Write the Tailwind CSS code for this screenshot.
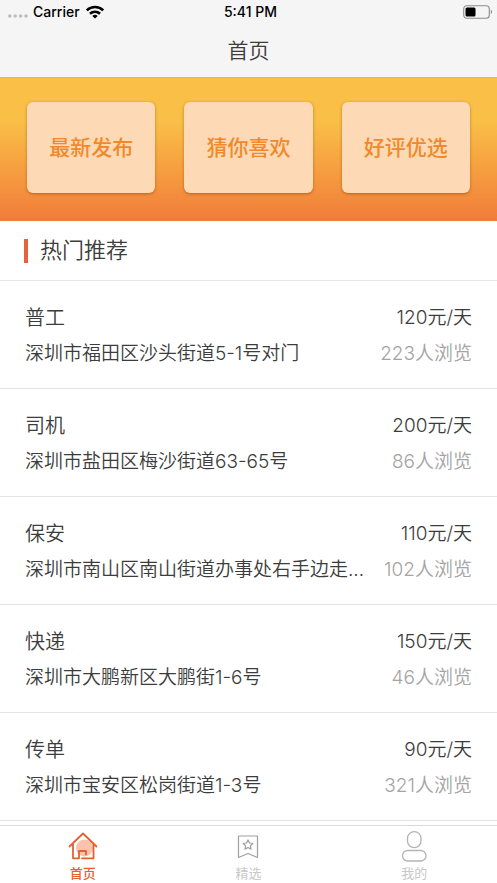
<!DOCTYPE html>
<html lang="zh-CN">
<head>
<meta charset="utf-8">
<meta name="viewport" content="width=device-width, initial-scale=1">
<title>首页</title>
<script src="https://cdn.jsdelivr.net/npm/@tailwindcss/browser@4"></script>
</head>
<body class="flex min-h-screen flex-col bg-white font-['Inter','Noto_Sans_CJK_SC',sans-serif] text-[#3c3c3c]">

<header class="border-b border-[#d9b58a] bg-[#f6f5f6]">
  <div class="grid h-6 grid-cols-3 items-center pr-1 pl-2 text-sm font-medium text-black">
    <div class="flex items-center gap-[5px]">
      <svg class="mt-2 h-1 w-5" viewBox="0 0 20 4" fill="#bdbdbd" aria-hidden="true"><circle cx="1.8" cy="2" r="1.8"/><circle cx="7.2" cy="2" r="1.8"/><circle cx="12.6" cy="2" r="1.8"/><circle cx="18" cy="2" r="1.8"/></svg>
      <span>Carrier</span>
      <svg class="h-[14px] w-5" viewBox="0 0 20 14" fill="none" stroke="#000" stroke-width="2.6" aria-hidden="true"><path d="M1.8 5.4a11.7 11.7 0 0 1 16.4 0"/><path d="M5 8.8a7.2 7.2 0 0 1 10 0"/><path d="M10 13.6 7.3 11a3.9 3.9 0 0 1 5.4 0Z" fill="#000" stroke="none"/></svg>
    </div>
    <span class="text-center">5:41 PM</span>
    <svg class="h-[14px] w-[30px] justify-self-end" viewBox="0 0 30 14" fill="none" aria-hidden="true"><rect x=".7" y=".7" width="25.6" height="12.6" rx="3" stroke="#8c8c8c" stroke-width="1.1"/><rect x="2.5" y="2.5" width="10" height="9" rx="1.5" fill="#000"/><path d="M27.8 4.8v4.4c1.6-.6 1.6-3.8 0-4.4Z" fill="#8c8c8c"/></svg>
  </div>
  <h1 class="flex h-[53px] items-center justify-center text-[21px] font-[350]">首页</h1>
</header>

<main>
  <nav aria-label="推荐分类" class="grid grid-cols-3 gap-[29px] bg-linear-to-b from-[#f9bf46] from-30% to-[#f07b3a] px-[27px] pt-6 pb-7 text-[21px] font-medium text-[#f0892b]">
    <button class="h-[91px] rounded-md bg-[#fdd9b5] shadow-[0_1px_3px_rgba(120,60,0,0.5)]">最新发布</button>
    <button class="h-[91px] rounded-md bg-[#fdd9b5] shadow-[0_1px_3px_rgba(120,60,0,0.5)]">猜你喜欢</button>
    <button class="h-[91px] rounded-md bg-[#fdd9b5] shadow-[0_1px_3px_rgba(120,60,0,0.5)]">好评优选</button>
  </nav>

  <section class="font-[350]">
    <h2 class="flex h-15 items-center gap-3 border-b border-[#e6e6e6] px-6 text-[22px]"><span class="h-6 w-1 bg-[#e8623a]"></span>热门推荐</h2>
    <ul class="text-[19px] leading-9">
      <li class="border-b border-[#e4e4e4] px-[25px] pt-[19px] pb-4">
        <div class="flex justify-between"><h3 class="text-xl leading-9">普工</h3><span>120元/天</span></div>
        <div class="flex justify-between gap-2"><p class="truncate">深圳市福田区沙头街道5-1号对门</p><span class="shrink-0 text-[#a4a4a4]">223人浏览</span></div>
      </li>
      <li class="border-b border-[#e4e4e4] px-[25px] pt-[19px] pb-4">
        <div class="flex justify-between"><h3 class="text-xl leading-9">司机</h3><span>200元/天</span></div>
        <div class="flex justify-between gap-2"><p class="truncate">深圳市盐田区梅沙街道63-65号</p><span class="shrink-0 text-[#a4a4a4]">86人浏览</span></div>
      </li>
      <li class="border-b border-[#e4e4e4] px-[25px] pt-[19px] pb-4">
        <div class="flex justify-between"><h3 class="text-xl leading-9">保安</h3><span>110元/天</span></div>
        <div class="flex justify-between gap-2"><p class="truncate">深圳市南山区南山街道办事处右手边走...</p><span class="shrink-0 text-[#a4a4a4]">102人浏览</span></div>
      </li>
      <li class="border-b border-[#e4e4e4] px-[25px] pt-[19px] pb-4">
        <div class="flex justify-between"><h3 class="text-xl leading-9">快递</h3><span>150元/天</span></div>
        <div class="flex justify-between gap-2"><p class="truncate">深圳市大鹏新区大鹏街1-6号</p><span class="shrink-0 text-[#a4a4a4]">46人浏览</span></div>
      </li>
      <li class="border-b border-[#e4e4e4] px-[25px] pt-[19px] pb-4">
        <div class="flex justify-between"><h3 class="text-xl leading-9">传单</h3><span>90元/天</span></div>
        <div class="flex justify-between gap-2"><p class="truncate">深圳市宝安区松岗街道1-3号</p><span class="shrink-0 text-[#a4a4a4]">321人浏览</span></div>
      </li>
    </ul>
  </section>
</main>

<nav aria-label="主导航" class="sticky bottom-0 mt-auto grid grid-cols-3 border-t border-[#dcdcdc] bg-white pt-[5px] text-[13px] leading-5 text-[#c8c8c8]">
  <a href="#home" aria-current="page" class="flex flex-col items-center font-medium text-[#e5602f]">
    <svg class="h-8 w-8" viewBox="0 0 32 32" fill="none" aria-hidden="true"><circle cx="17.5" cy="17" r="8.5" fill="#fbc3ad"/><path d="M2.5 15.500 16 2.500 29.500 15.500M6 13v14.300h6v-7.300h7v3.500M15 27.300h11.500V13" stroke="#e5602f" stroke-width="1.8" stroke-linecap="round" stroke-linejoin="round"/></svg>
    首页
  </a>
  <a href="#featured" class="flex flex-col items-center">
    <svg class="h-8 w-8" viewBox="0 0 32 32" fill="none" stroke="#a0a0a0" stroke-width="1.2" stroke-linejoin="round" aria-hidden="true"><path d="M6.5 5v21.500L16 22.500l9.500 4V5Z"/><path d="m16 9 1.500 3 3.300.5-2.400 2.300.6 3.300-3-1.600-3 1.600.6-3.300-2.400-2.300 3.300-.5Z"/></svg>
    精选
  </a>
  <a href="#me" class="flex flex-col items-center">
    <svg class="h-8 w-8" viewBox="0 0 32 32" fill="none" stroke="#b4b4b4" stroke-width="1.3" aria-hidden="true"><rect x="9.500" y=".7" width="13.500" height="16" rx="6.700"/><rect x="4.500" y="19.500" width="23.500" height="10.500" rx="5.200"/></svg>
    我的
  </a>
</nav>
</body>
</html>
